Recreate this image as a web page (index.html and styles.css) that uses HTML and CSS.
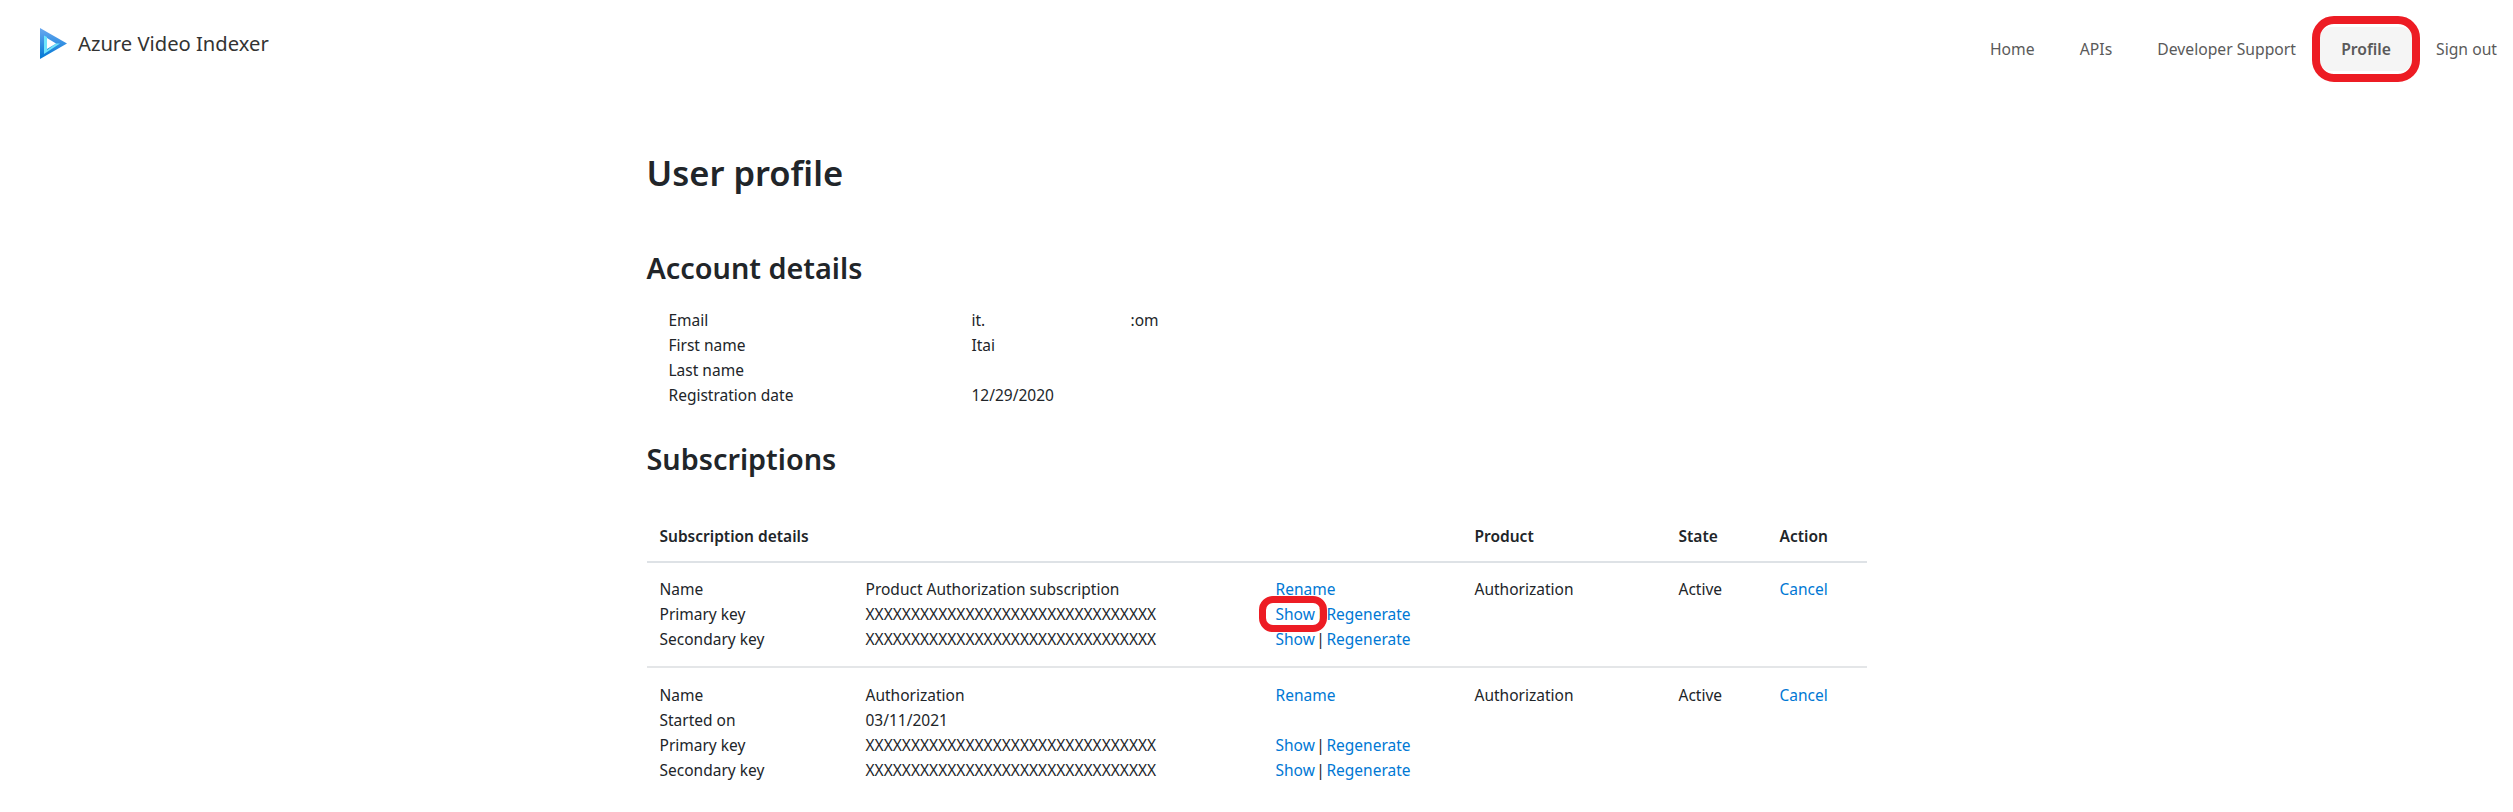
FILE: index.html
```html
<!DOCTYPE html>
<html lang="en">
<head>
    <meta charset="UTF-8">
    <meta name="viewport" content="width=device-width, initial-scale=1.0">
    <title>User profile - Azure Video Indexer</title>
    <link rel="stylesheet" href="styles.css">
</head>
<body>

    <header class="topbar">
        <a class="brand" href="#">
            <svg class="brand-logo" viewBox="0 0 27 31" width="27" height="31" aria-hidden="true">
                <defs>
                    <linearGradient id="logoBlue" x1="0" y1="0" x2="0" y2="1">
                        <stop offset="0" stop-color="#6aa8f0"/>
                        <stop offset="1" stop-color="#0078d4"/>
                    </linearGradient>
                </defs>
                <polygon points="0,0 27,15.5 0,31" fill="url(#logoBlue)"/>
                <polygon points="4,7.5 7,9 7,22 16,15.5 20,15.5 4,26" fill="#6fe4fb"/>
                <polygon points="7,10 16,15.5 7,21" fill="#ffffff"/>
            </svg>
            <span>Azure Video Indexer</span>
        </a>
        <nav class="nav">
            <a href="#">Home</a>
            <a href="#">APIs</a>
            <a href="#">Developer Support</a>
            <a class="nav-active" href="#">Profile<span class="callout"></span></a>
            <a href="#">Sign out</a>
        </nav>
    </header>

    <main class="page">
        <h1>User profile</h1>

        <h2 class="account-title">Account details</h2>
        <div class="details">
            <div>Email</div><div class="email"><span>it.</span><span>:om</span></div>
            <div>First name</div><div>Itai</div>
            <div>Last name</div><div></div>
            <div>Registration date</div><div>12/29/2020</div>
        </div>

        <h2 class="subs-title">Subscriptions</h2>
        <table class="subs">
            <colgroup>
                <col class="col-label">
                <col class="col-value">
                <col class="col-links">
                <col class="col-product">
                <col class="col-state">
                <col class="col-action">
            </colgroup>
            <thead>
                <tr>
                    <th colspan="3">Subscription details</th>
                    <th>Product</th>
                    <th>State</th>
                    <th>Action</th>
                </tr>
            </thead>
            <tbody>
                <tr>
                    <td>
                        <div>Name</div>
                        <div>Primary key</div>
                        <div>Secondary key</div>
                    </td>
                    <td>
                        <div>Product Authorization subscription</div>
                        <div>XXXXXXXXXXXXXXXXXXXXXXXXXXXXXXXX</div>
                        <div>XXXXXXXXXXXXXXXXXXXXXXXXXXXXXXXX</div>
                    </td>
                    <td class="links">
                        <div><a href="#">Rename</a></div>
                        <div><span class="show-wrap"><a href="#">Show</a><span class="callout"></span></span> | <a href="#">Regenerate</a></div>
                        <div><a href="#">Show</a> | <a href="#">Regenerate</a></div>
                    </td>
                    <td>Authorization</td>
                    <td>Active</td>
                    <td><a href="#">Cancel</a></td>
                </tr>
                <tr>
                    <td>
                        <div>Name</div>
                        <div>Started on</div>
                        <div>Primary key</div>
                        <div>Secondary key</div>
                    </td>
                    <td>
                        <div>Authorization</div>
                        <div>03/11/2021</div>
                        <div>XXXXXXXXXXXXXXXXXXXXXXXXXXXXXXXX</div>
                        <div>XXXXXXXXXXXXXXXXXXXXXXXXXXXXXXXX</div>
                    </td>
                    <td class="links">
                        <div><a href="#">Rename</a></div>
                        <div>&nbsp;</div>
                        <div><a href="#">Show</a> | <a href="#">Regenerate</a></div>
                        <div><a href="#">Show</a> | <a href="#">Regenerate</a></div>
                    </td>
                    <td>Authorization</td>
                    <td>Active</td>
                    <td><a href="#">Cancel</a></td>
                </tr>
            </tbody>
        </table>
    </main>

</body>
</html>
```

FILE: styles.css
```css
body {
    margin: 0;
    font-family: "Noto Sans", "Open Sans", Arial, sans-serif;
    font-size: 15.5px;
    line-height: 25px;
    color: #212529;
    background: #fff;
}
a { color: #0078d4; text-decoration: none; }

/* top bar */
.topbar {
    display: flex;
    justify-content: space-between;
    padding: 28px 16px 0 40px;
    height: 76px;
    box-sizing: border-box;
}
.brand { display: flex; align-items: flex-start; gap: 11px; color: #333; font-size: 20.2px; line-height: 30px; }
.nav { display: flex; align-items: flex-start; margin-top: -1px; font-size: 15.7px; }
.nav a { color: #5a5a5a; padding: 0 22.6px; height: 44px; line-height: 44px; position: relative; border-radius: 12px; }
.nav .nav-active { background: #f5f5f5; font-weight: 600; }
.nav a:last-child { padding-right: 0; }

/* red annotations */
.callout {
    position: absolute;
    border: 8px solid #ed1c24;
    border-radius: 22px;
    inset: -11px -7px -11px -7px;
}
.show-wrap { position: relative; }
.show-wrap .callout { inset: -7px -12px -7px -17px; border-radius: 14px; border-width: 7px; }

/* content */
.page { width: 1220px; margin: 0 auto; }
h1 { font-size: 34.5px; line-height: 50px; font-weight: 575; margin: 72px 0 0; }
h2 { font-size: 28.8px; line-height: 40px; font-weight: 575; margin: 0; }
.account-title { margin-top: 50px; }
.subs-title { margin-top: 31px; }

.details {
    display: grid;
    grid-template-columns: 303px 1fr;
    padding-left: 22px;
    margin-top: 20px;
}
.details div { min-height: 25px; }
.email { display: flex; }
.email span:first-child { width: 159px; }

/* subscriptions table */
.subs { width: 100%; border-collapse: collapse; table-layout: fixed; margin-top: 33px; }
.col-label { width: 206px; }
.col-value { width: 410px; }
.col-links { width: 199px; }
.col-product { width: 204px; }
.col-state { width: 101px; }
.col-action { width: 100px; }
.subs th { text-align: left; font-weight: 600; padding: 12px 13px; border-bottom: 2px solid #dee2e6; }
.subs td { vertical-align: top; padding: 14px 13px 14px; }
.subs tbody tr + tr td { border-top: 2px solid #e4e6e8; padding-top: 15px; }
.links { word-spacing: -2.5px; }
```
